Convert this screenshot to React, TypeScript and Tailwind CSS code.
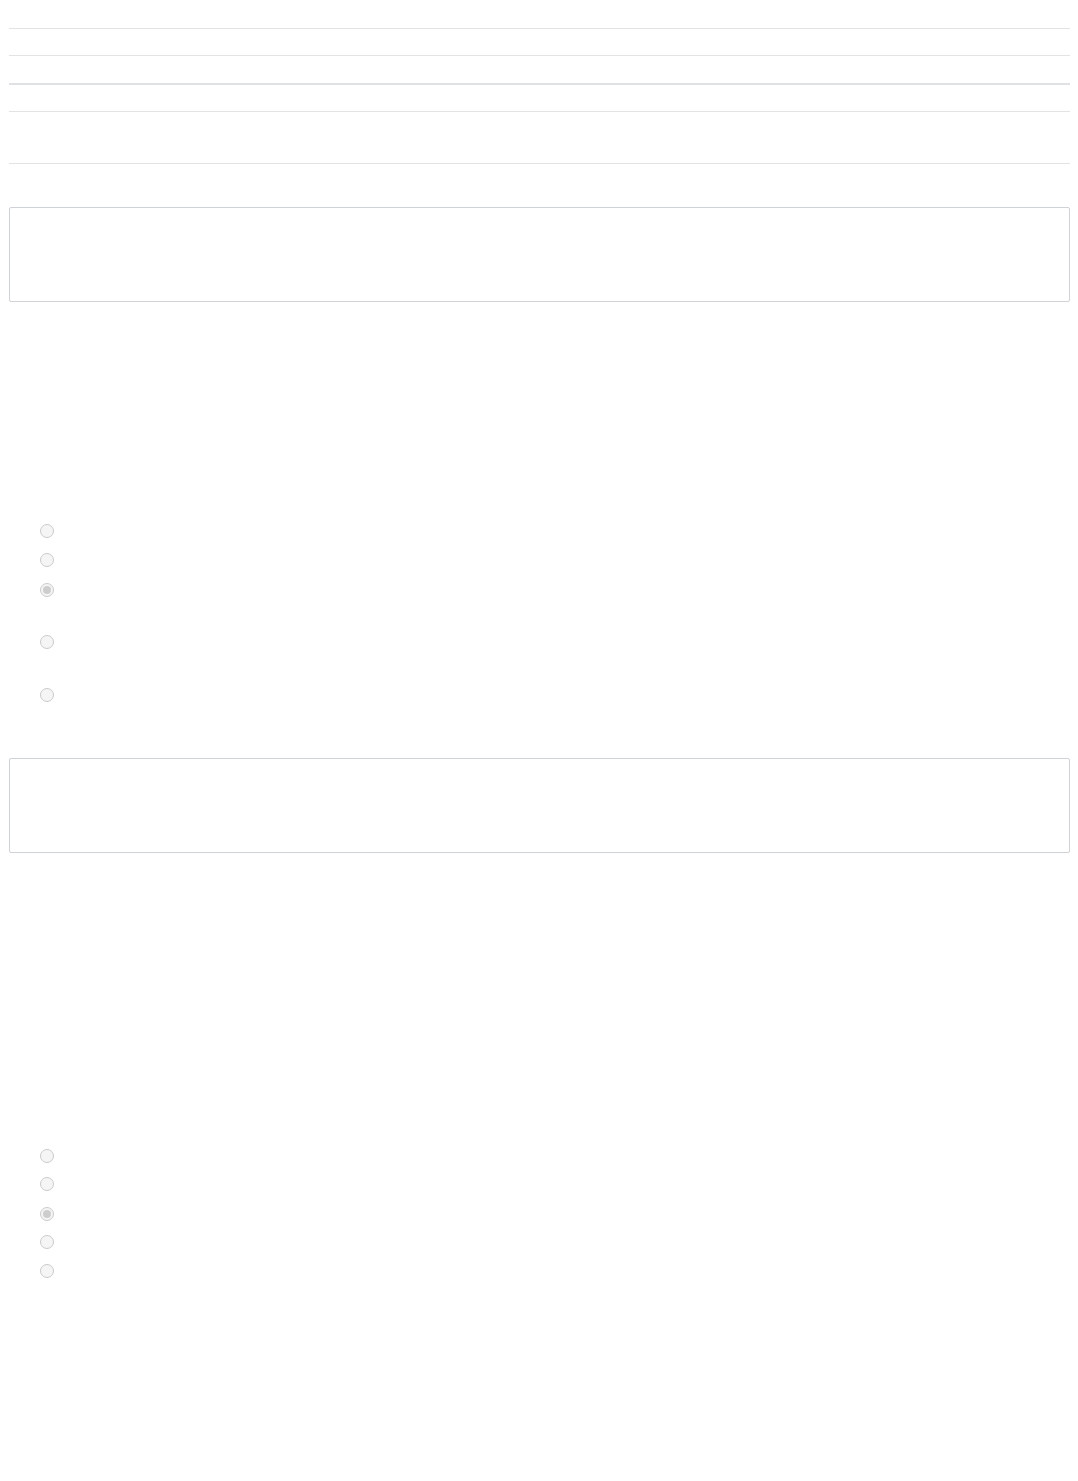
import React from "react";

const Radio = ({ checked, h }: { checked?: boolean; h: string }) => (
  <div className={`flex items-start pl-[31px] ${h}`}>
    <span
      role="radio"
      aria-checked={!!checked}
      aria-disabled
      className="flex h-[14px] w-[14px] items-center justify-center rounded-full border border-[#cbcbcb] bg-[#f5f5f5]"
    >
      {checked && (
        <span className="h-[8px] w-[8px] rounded-full bg-[#cdcdcd]" />
      )}
    </span>
  </div>
);

const Box = () => (
  <div className="h-[95px] rounded-[2px] border border-[#cfd2d6] bg-white" />
);

const App = () => {
  return (
    <div
      className="min-h-[1481px] bg-white pl-[9px] pr-[8px] pt-[28px]"
      style={{ fontFamily: '"Liberation Sans", Arial, sans-serif' }}
    >
      <div className="h-[27px] border-t border-[#e3e3e3]" />
      <div className="h-[28px] border-t border-[#e3e3e3]" />
      <div className="h-[28px] border-t-2 border-[#dfe1e5]" />
      <div className="h-[52px] border-t border-[#e3e3e3]" />
      <div className="h-[44px] border-t border-[#e3e3e3]" />

      <Box />

      <div className="pt-[222px]">
        <Radio h="h-[29px]" />
        <Radio h="h-[30px]" />
        <Radio h="h-[52px]" checked />
        <Radio h="h-[53px]" />
        <Radio h="h-[70px]" />
      </div>

      <Box />

      <div className="pt-[296px]">
        <Radio h="h-[28px]" />
        <Radio h="h-[30px]" />
        <Radio h="h-[28px]" checked />
        <Radio h="h-[29px]" />
        <Radio h="h-[29px]" />
      </div>
    </div>
  );
};

export default App;
